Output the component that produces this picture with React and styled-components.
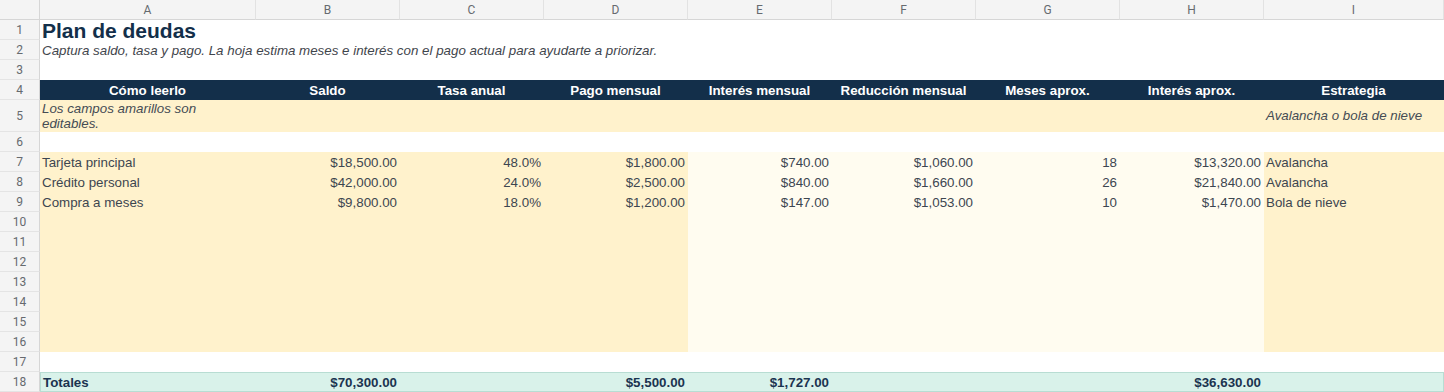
import React from "react";
import styled, { createGlobalStyle, css } from "styled-components";

const Global = createGlobalStyle`
  html, body { margin: 0; padding: 0; background: #ffffff; }
  body { font-family: "Liberation Sans", Arial, sans-serif; }
`;

const NAVY = "#132f4a";
const YELLOW = "#fff2cc";
const LIGHT = "#fffcf0";
const TEAL = "#d9f2ea";
const TEAL_LINE = "#b8ddd3";
const TEXT = "#3d4650";

const Sheet = styled.div`
  display: grid;
  grid-template-columns: 40px 216px repeat(7, 144px) 180px;
  grid-template-rows: repeat(5, 20px) 32px repeat(13, 20px);
  width: 1444px;
  overflow: hidden;
  font-family: "Liberation Sans", Arial, sans-serif;
  font-size: 13.33px;
  color: ${TEXT};
`;

const Corner = styled.div`
  background: #f4f4f4;
  border-right: 1px solid #d6d6d6;
  border-bottom: 1px solid #d6d6d6;
  box-sizing: border-box;
`;

const ColHead = styled.div`
  background: #f4f4f4;
  border-right: 1px solid #e2e2e2;
  border-bottom: 1px solid #d6d6d6;
  box-sizing: border-box;
  display: flex;
  align-items: center;
  justify-content: center;
  font-family: Roboto, "Liberation Sans", sans-serif;
  font-size: 12px;
  color: #666a6f;
`;

const RowHead = styled.div`
  background: #f4f4f4;
  border-right: 1px solid #d6d6d6;
  border-bottom: 1px solid #e4e4e4;
  box-sizing: border-box;
  display: flex;
  align-items: center;
  justify-content: center;
  font-family: Roboto, "Liberation Sans", sans-serif;
  font-size: 12px;
  color: #666a6f;
`;

const Cell = styled.div`
  box-sizing: border-box;
  padding: 0 3px 0 2px;
  display: flex;
  align-items: center;
  justify-content: ${(p) => (p.$align === "right" ? "flex-end" : p.$align === "center" ? "center" : "flex-start")};
  background: ${(p) => p.$bg || "#ffffff"};
  white-space: nowrap;
  overflow: visible;
  line-height: 15px;
`;

const TitleCell = styled(Cell)`
  grid-column: span 9;
  font-size: 21px;
  font-weight: 700;
  color: ${NAVY};
  line-height: 20px;
  padding-top: 2px;
`;

const SubtitleCell = styled(Cell)`
  grid-column: span 9;
  font-style: italic;
  color: #3f454c;
`;

const BlankCell = styled(Cell)`
  grid-column: span 9;
`;

const HeadCell = styled(Cell)`
  background: ${NAVY};
  color: #ffffff;
  font-weight: 700;
  justify-content: center;
`;

const NoteCell = styled(Cell)`
  background: ${YELLOW};
  font-style: italic;
  color: #454c54;
  white-space: normal;
  line-height: 15.5px;
`;

const TotalCell = styled(Cell)`
  background: ${TEAL};
  border-top: 1px solid ${TEAL_LINE};
  border-bottom: 1px solid ${TEAL_LINE};
  ${(p) => p.$first && css`border-left: 1px solid ${TEAL_LINE};`}
  ${(p) => p.$last && css`border-right: 1px solid ${TEAL_LINE};`}
  font-weight: 700;
  color: #1b3450;
`;

const COLS = ["A", "B", "C", "D", "E", "F", "G", "H", "I"];
const HEADERS = [
  "Cómo leerlo",
  "Saldo",
  "Tasa anual",
  "Pago mensual",
  "Interés mensual",
  "Reducción mensual",
  "Meses aprox.",
  "Interés aprox.",
  "Estrategia",
];
const DEBTS = [
  ["Tarjeta principal", "$18,500.00", "48.0%", "$1,800.00", "$740.00", "$1,060.00", "18", "$13,320.00", "Avalancha"],
  ["Crédito personal", "$42,000.00", "24.0%", "$2,500.00", "$840.00", "$1,660.00", "26", "$21,840.00", "Avalancha"],
  ["Compra a meses", "$9,800.00", "18.0%", "$1,200.00", "$147.00", "$1,053.00", "10", "$1,470.00", "Bola de nieve"],
];
const EMPTY = Array(9).fill("");
const BODY = [...DEBTS, ...Array(7).fill(EMPTY)];
const TOTALS = ["Totales", "$70,300.00", "", "$5,500.00", "$1,727.00", "", "", "$36,630.00", ""];

const fillFor = (i) => (i >= 4 && i <= 7 ? LIGHT : YELLOW);
const alignFor = (i) => (i === 0 || i === 8 ? "left" : "right");

export default function App() {
  return (
    <>
      <Global />
      <Sheet>
        <Corner />
        {COLS.map((c) => (
          <ColHead key={c}>{c}</ColHead>
        ))}

        <RowHead>1</RowHead>
        <TitleCell>Plan de deudas</TitleCell>

        <RowHead>2</RowHead>
        <SubtitleCell>
          Captura saldo, tasa y pago. La hoja estima meses e interés con el pago actual para ayudarte a priorizar.
        </SubtitleCell>

        <RowHead>3</RowHead>
        <BlankCell />

        <RowHead>4</RowHead>
        {HEADERS.map((h) => (
          <HeadCell key={h}>{h}</HeadCell>
        ))}

        <RowHead>5</RowHead>
        <NoteCell>Los campos amarillos son editables.</NoteCell>
        {Array.from({ length: 7 }).map((_, i) => (
          <NoteCell key={i} />
        ))}
        <NoteCell>Avalancha o bola de nieve</NoteCell>

        <RowHead>6</RowHead>
        <BlankCell />

        {BODY.map((row, r) => (
          <React.Fragment key={r}>
            <RowHead>{r + 7}</RowHead>
            {row.map((v, i) => (
              <Cell key={i} $bg={fillFor(i)} $align={alignFor(i)}>
                {v}
              </Cell>
            ))}
          </React.Fragment>
        ))}

        <RowHead>17</RowHead>
        <BlankCell />

        <RowHead>18</RowHead>
        {TOTALS.map((v, i) => (
          <TotalCell key={i} $align={alignFor(i)} $first={i === 0} $last={i === 8}>
            {v}
          </TotalCell>
        ))}
      </Sheet>
    </>
  );
}
